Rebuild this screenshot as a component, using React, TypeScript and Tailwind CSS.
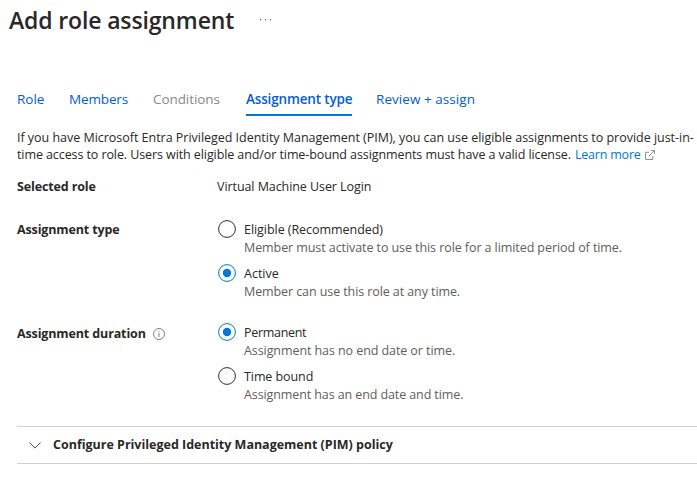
import { useState } from 'react';
import type { ReactNode } from 'react';

function Radio({ checked, onSelect, label, hint, labelClass, hintClass }: {
  checked: boolean; onSelect: () => void; label: string; hint: string; labelClass: string; hintClass: string;
}) {
  return (
    <button type="button" role="radio" aria-checked={checked} onClick={onSelect} className="flex h-11 items-start gap-2 text-left">
      <svg width="18" height="18" viewBox="0 0 18 18" fill="none" className="shrink-0">
        <circle cx="9" cy="9" r="8.4" stroke={checked ? '#0078d4' : '#323130'} />
        {checked && <circle cx="9" cy="9" r="4.2" fill="#0078d4" />}
      </svg>
      <span className="flex flex-col whitespace-nowrap pt-px leading-[18px]">
        <span className={labelClass}>{label}</span>
        <span className={`text-[#605e5c] ${hintClass}`}>{hint}</span>
      </span>
    </button>
  );
}

function Label({ children }: { children: ReactNode }) {
  return <div className="flex h-[18px] w-[201px] shrink-0 items-center gap-2 whitespace-nowrap font-bold leading-[18px] tracking-[-0.13px]">{children}</div>;
}

export default function App() {
  const [type, setType] = useState('active');
  const [duration, setDuration] = useState('permanent');
  return (
    <main className="h-[496px] w-[697px] overflow-hidden bg-white font-['Open_Sans','Noto_Sans',sans-serif] text-[12.5px] text-[#292827]">
      <header className="flex h-10 items-center pl-[9px]">
        <h1 className="w-[225px] whitespace-nowrap text-[23px] font-semibold leading-10 tracking-[-0.14px]">Add role assignment</h1>
        <svg width="12" height="4" viewBox="0 0 12 4" fill="#605e5c" className="ml-[26px]">
          <rect x="0" y="1" width="1.2" height="1.2" />
          <rect x="5" y="1" width="1.2" height="1.2" />
          <rect x="10" y="1" width="1.2" height="1.2" />
        </svg>
      </header>
      <nav className="mt-12 flex h-7 gap-6 whitespace-nowrap pl-[17px] text-[13.5px] leading-[23px] text-[#015cda]">
        <a className="w-7">Role</a>
        <a className="w-[60px] tracking-[-0.15px]">Members</a>
        <a className="w-[69px] tracking-[-0.08px] text-[#8a8886]">Conditions</a>
        <a className="w-[106px] border-b-2 border-[#0078d4] font-semibold tracking-[-0.15px]">Assignment type</a>
        <a className="tracking-[0.05px]">Review + assign</a>
      </nav>
      <section className="pl-[17px]">
        <p className="mt-[13px] whitespace-nowrap leading-[17px]">
          <span className="block tracking-[-0.025px]">If you have Microsoft Entra Privileged Identity Management (PIM), you can use eligible assignments to provide just-in-</span>
          <span className="flex items-center">
            <span className="tracking-[-0.09px]">time access to role. Users with eligible and/or time-bound assignments must have a valid license.</span>
            <a className="ml-1 tracking-[-0.2px] text-[#0078d4]">Learn more</a>
            <svg width="10" height="10" viewBox="0 0 11 11" fill="none" stroke="#85838a" className="ml-1">
              <path d="M4.5 2.5h-4v8h8v-4M6.5.5h4v4M10.5.5l-6 6" />
            </svg>
          </span>
        </p>
        <div className="mt-[14px] flex h-[43px] leading-[18px]">
          <Label><span className="pt-[2px]">Selected role</span></Label>
          <span className="-ml-px mt-px tracking-[-0.07px]">Virtual Machine User Login</span>
        </div>
        <div className="flex items-start">
          <Label><span className="pt-px">Assignment type</span></Label>
          <div role="radiogroup">
            <Radio checked={type === 'eligible'} onSelect={() => setType('eligible')} label="Eligible (Recommended)" hint="Member must activate to use this role for a limited period of time." labelClass="tracking-[-0.05px]" hintClass="tracking-[-0.08px]" />
            <Radio checked={type === 'active'} onSelect={() => setType('active')} label="Active" hint="Member can use this role at any time." labelClass="" hintClass="tracking-[-0.09px]" />
          </div>
        </div>
        <div className="mt-[15px] flex items-start">
          <Label>
            <span className="w-32 pt-[3px]">Assignment duration</span>
            <svg width="12" height="12" viewBox="0 0 12 12" fill="none" stroke="#605e5c" strokeWidth=".8" className="mt-[3px]">
              <circle cx="6" cy="6" r="5.5" />
              <path d="M6 5v4M6 3v1" />
            </svg>
          </Label>
          <div role="radiogroup">
            <Radio checked={duration === 'permanent'} onSelect={() => setDuration('permanent')} label="Permanent" hint="Assignment has no end date or time." labelClass="tracking-[-0.3px]" hintClass="tracking-[-0.08px]" />
            <Radio checked={duration === 'bound'} onSelect={() => setDuration('bound')} label="Time bound" hint="Assignment has an end date and time." labelClass="tracking-[-0.08px]" hintClass="tracking-[-0.1px]" />
          </div>
        </div>
        <button type="button" className="mt-[15px] flex h-[38px] w-full items-center border-y border-[#d2d0ce] pl-3 font-bold">
          <svg width="12" height="7" viewBox="0 0 12 7" fill="none" stroke="#484644">
            <path d="m.4.5 5.6 5.6L11.6.5" />
          </svg>
          <span className="ml-3 whitespace-nowrap tracking-[-0.01px]">Configure Privileged Identity Management (PIM) policy</span>
        </button>
      </section>
    </main>
  );
}
